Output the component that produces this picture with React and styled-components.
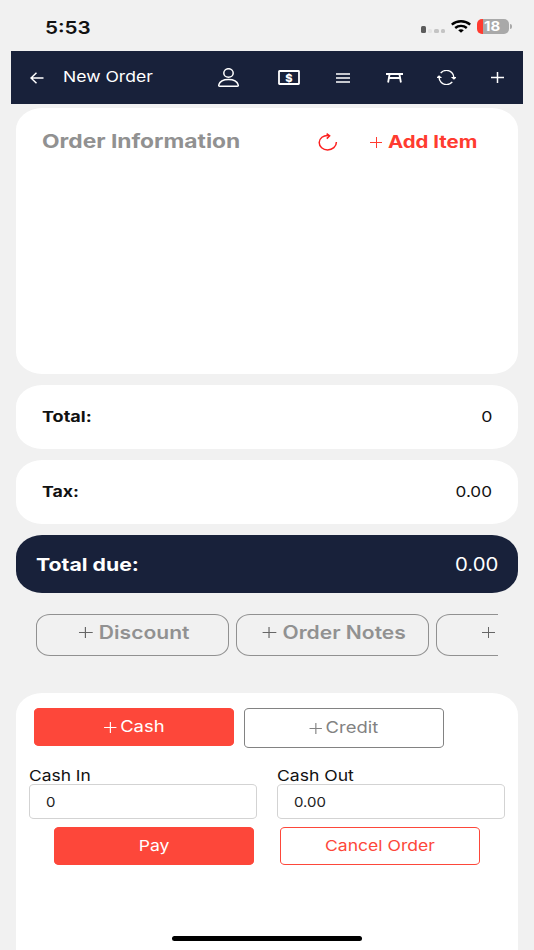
import React, { useState } from "react";
import styled, { createGlobalStyle } from "styled-components";

const App = () => {
  const [cashIn, setCashIn] = useState("0");
  const [cashOut, setCashOut] = useState("0.00");

  return (
    <Screen>
      <GlobalStyle />
      <StatusBar>
        <Text $size={17.5} $weight={600} $wide={1.18}>5:53</Text>
        <StatusIcons>
          <Signal>
            <Bar $h={7} $color="#5c5c5c" />
            <Bar $h={4} $color="#e4e4e4" />
            <Bar $h={4} $color="#c4c4c4" />
            <Bar $h={4} $color="#c4c4c4" />
          </Signal>
          <WifiIcon />
          <Battery>
            <Text $size={13} $weight={700} $wide={1.15} $origin="center" $color="#fff">18</Text>
          </Battery>
          <BatteryTip />
        </StatusIcons>
      </StatusBar>

      <NavBar>
        <BackIcon />
        <NavTitle>
          <Text $size={15} $wide={1.17} $color="#fff">New Order</Text>
        </NavTitle>
        <NavIcons>
          <PersonIcon />
          <MoneyIcon />
          <MenuIcon />
          <TableIcon />
          <SyncIcon />
          <AddIcon />
        </NavIcons>
      </NavBar>

      <OrderCard>
        <Text $size={19} $weight={700} $wide={1.2} $color="#919191">Order Information</Text>
        <OrderActions>
          <RefreshIcon />
          <AddItem>
            <Plus $size={12} />
            <Text $size={17} $weight={700} $wide={1.2} $color="#ff3b30">Add Item</Text>
          </AddItem>
        </OrderActions>
      </OrderCard>

      <SummaryCard>
        <Text $size={15} $weight={700} $wide={1.2}>Total:</Text>
        <Text $size={15} $wide={1.18} $origin="right">0</Text>
      </SummaryCard>
      <SummaryCard>
        <Text $size={15} $weight={700} $wide={1.18}>Tax:</Text>
        <Text $size={15} $wide={1.14} $origin="right">0.00</Text>
      </SummaryCard>
      <DueCard>
        <Text $size={18} $weight={700} $wide={1.18} $color="#fff">Total due:</Text>
        <Text $size={18} $wide={1.13} $origin="right" $color="#fff">0.00</Text>
      </DueCard>

      <Extras>
        <ExtraButton type="button">
          <Label>
            <Plus $size={11.5} />
            <Caption>Discount</Caption>
          </Label>
        </ExtraButton>
        <ExtraButton type="button">
          <Label>
            <Plus $size={11.5} />
            <Caption>Order Notes</Caption>
          </Label>
        </ExtraButton>
        <ExtraButton type="button" $cut>
          <Plus $size={13} />
        </ExtraButton>
      </Extras>

      <PaymentCard>
        <Methods>
          <PayButton type="button" $filled>
            <Label $small>
              <Plus $size={10.5} />
              Cash
            </Label>
          </PayButton>
          <PayButton type="button" $grey>
            <Label $small>
              <Plus $size={10.5} />
              Credit
            </Label>
          </PayButton>
        </Methods>
        <Fields>
          <Field>
            <Text $size={15} $wide={1.16}>Cash In</Text>
            <InputBox>
              <Input value={cashIn} onChange={(e) => setCashIn(e.target.value)} />
            </InputBox>
          </Field>
          <Field>
            <Text $size={15} $wide={1.17}>Cash Out</Text>
            <InputBox>
              <Input value={cashOut} onChange={(e) => setCashOut(e.target.value)} />
            </InputBox>
          </Field>
        </Fields>
        <Actions>
          <PayButton type="button" $filled>
            <Text $size={15} $wide={1.17} $origin="center" $color="#fff">Pay</Text>
          </PayButton>
          <PayButton type="button">
            <Text $size={15} $wide={1.17} $origin="center" $color="#fd473a">Cancel Order</Text>
          </PayButton>
        </Actions>
        <HomeIndicator />
      </PaymentCard>
    </Screen>
  );
};

const WifiIcon = () => (
  <svg width="20" height="13" viewBox="0 0 20 13" fill="none" stroke="#000" strokeWidth="2.4">
    <path d="M.8 4.600C6 .2 14 .2 19.200 4.600" />
    <path d="M4.200 8c3.300-2.900 8.300-2.900 11.600 0" />
    <path d="M7.200 10.300c1.600-1.300 4-1.300 5.600 0L10 12.800z" fill="#000" stroke="none" />
  </svg>
);

const BackIcon = () => (
  <svg width="14" height="12" viewBox="0 0 14 12" fill="none" stroke="#fff" strokeWidth="1.5">
    <path d="M13.500 6H1M6.500 .8L1 6l5.500 5.200" />
  </svg>
);

const PersonIcon = () => (
  <svg width="22" height="20" viewBox="0 0 22 20" fill="none" stroke="#fff" strokeWidth="1.5">
    <ellipse cx="10.500" cy="5" rx="4.700" ry="4.300" />
    <path d="M1.800 18.300C.8 18.300.5 17.600.8 16.800 1.800 13.300 6 11.500 10.500 11.500s8.700 1.800 9.700 5.300c.3.800 0 1.500-1 1.500z" />
  </svg>
);

const MoneyIcon = () => (
  <svg width="22" height="15" viewBox="0 0 22 15">
    <rect x="1" y="1" width="20" height="13" rx=".5" fill="none" stroke="#fff" strokeWidth="1.8" />
    <text x="11" y="11.500" fill="#fff" fontFamily="Inter, sans-serif" fontSize="11" fontWeight="800" textAnchor="middle">$</text>
  </svg>
);

const MenuIcon = () => (
  <svg width="14" height="10" viewBox="0 0 14 10" stroke="#fff" strokeWidth="1.6">
    <path d="M0 1h14M0 5h14M0 9h14" />
  </svg>
);

const TableIcon = () => (
  <svg width="17" height="11" viewBox="0 0 17 11" fill="none" stroke="#fff" strokeWidth="1.8">
    <path d="M0 2h17M2.600 6h11.800M3.600 2L2.100 10.500M13.400 2l1.500 8.500" />
  </svg>
);

const SyncIcon = () => (
  <svg width="19" height="15" viewBox="26 66 460 380" preserveAspectRatio="none" fill="none" stroke="#fff" strokeWidth="34">
    <path d="M434.670 285.590v-29.800c0-98.730-80.240-178.790-179.200-178.790a179 179 0 00-140.140 67.360m-38.530 82v29.800C76.800 355 157 435 256 435a180.450 180.450 0 00140-66.920" />
    <path d="M46 252l30-30 32 30zM466 260l-30 30-32-30z" fill="#fff" />
  </svg>
);

const AddIcon = () => (
  <svg width="13" height="11" viewBox="0 0 13 11" stroke="#fff" strokeWidth="1.5">
    <path d="M0 5.500h13M6.500 0v11" />
  </svg>
);

const RefreshIcon = () => (
  <svg width="20" height="18" viewBox="0 0 20 18" fill="none" stroke="#fc1f1f" strokeWidth="1.5">
    <path d="M11 2.500C5.200 1.900 1.200 5.400 1.200 9.600c0 4.100 3.700 7.300 8.400 7.300 4.900 0 8.800-3.300 8.800-8" />
    <path d="M8.600 .6l3 2.200-2.800 2.800" />
  </svg>
);

const GlobalStyle = createGlobalStyle`
  *{
    box-sizing: border-box;
  }
  body{
    margin: 0;
    background-color: #f1f1f1;
    font-family: Inter, "Liberation Sans", sans-serif;
  }
  button{
    font-family: inherit;
    padding: 0;
    margin: 0;
    background: none;
  }
  svg{
    display: block;
    flex: none;
  }
`;

const Screen = styled.div`
  width: 534px;
  height: 950px;
  overflow: hidden;
  display: flex;
  flex-direction: column;
  background-color: #f1f1f1;
`;

/* Wide lettering, grown from the given side */
const Text = styled.span`
  display: inline-block;
  white-space: nowrap;
  line-height: 1.2;
  font-size: ${(p) => p.$size}px;
  font-weight: ${(p) => p.$weight || 400};
  color: ${(p) => p.$color || "#111"};
  transform: scaleX(${(p) => p.$wide});
  transform-origin: ${(p) => p.$origin || "left"};
`;

const Label = styled.span`
  display: inline-flex;
  align-items: center;
  gap: ${(p) => (p.$small ? 3.5 : 5.5)}px;
  white-space: nowrap;
  font-size: ${(p) => (p.$small ? 16 : 18)}px;
  line-height: 1.2;
  transform: scaleX(${(p) => (p.$small ? 1.15 : 1.17)});
`;

const Caption = styled.span`
  font-weight: 600;
  color: #919191;
`;

const StatusBar = styled.div`
  flex: none;
  height: 51px;
  padding: 3px 22px 0 44.5px;
  display: flex;
  align-items: center;
  justify-content: space-between;
`;

const StatusIcons = styled.div`
  display: flex;
  align-items: center;
  margin-top: -1px;
`;

const Signal = styled.div`
  display: flex;
  align-items: flex-end;
  gap: 2px;
  height: 14px;
  padding-bottom: 1px;
  margin-right: 6px;
`;

const Bar = styled.span`
  width: 4.5px;
  height: ${(p) => p.$h}px;
  border-radius: 1.5px;
  background-color: ${(p) => p.$color};
`;

const Battery = styled.div`
  width: 32px;
  height: 15px;
  margin-left: 6px;
  padding-right: 1px;
  border-radius: 5px;
  background: linear-gradient(90deg, #ff3b30 6px, #a9a9a9 6px);
  display: flex;
  align-items: center;
  justify-content: center;
`;

const BatteryTip = styled.span`
  width: 2px;
  height: 5px;
  margin-left: 1px;
  border-radius: 0 2px 2px 0;
  background-color: #a9a9a9;
`;

const NavBar = styled.div`
  height: 53px;
  margin: 0 11px;
  padding: 0 19px 0 18.5px;
  flex: none;
  display: flex;
  align-items: center;
  background-color: #18213a;
`;

const NavTitle = styled.div`
  width: 155px;
  margin: -3px 0 0 19px;
`;

const NavIcons = styled.div`
  flex: 1;
  display: grid;
  grid-template-columns: 60px 58px 50px 51px 54px 13px;
  align-items: center;
`;

const Card = styled.div`
  flex: none;
  margin: 0 16px;
  border-radius: 26px / 22px;
  background-color: #fff;
`;

const OrderCard = styled(Card)`
  height: 266px;
  margin-top: 4px;
  padding: 23px 41px 0 26px;
  display: flex;
  justify-content: space-between;
  align-items: flex-start;
`;

const OrderActions = styled.div`
  width: 159px;
  padding-top: 1px;
  display: flex;
  justify-content: space-between;
  align-items: center;
`;

const AddItem = styled.div`
  width: 107px;
  display: flex;
  align-items: center;
  gap: 5.5px;
  color: #ff3b30;
`;

const Plus = styled.span`
  width: ${(p) => p.$size}px;
  height: 11px;
  flex: none;
  background:
    linear-gradient(currentColor, currentColor) center / 100% 1px no-repeat,
    linear-gradient(currentColor, currentColor) center / 1px 100% no-repeat;
`;

const SummaryCard = styled(Card)`
  height: 64px;
  margin-top: 11px;
  padding: 0 26px;
  display: flex;
  align-items: center;
  justify-content: space-between;
`;

const DueCard = styled(SummaryCard)`
  height: 58px;
  padding: 1px 20px 0;
  background-color: #18213a;
`;

const Extras = styled.div`
  flex: none;
  display: flex;
  gap: 7px;
  margin: 21px 36px 0;
  overflow: hidden;
`;

const ExtraButton = styled.button`
  flex: none;
  width: 193px;
  height: 42px;
  padding: 0 0 5px ${(p) => (p.$cut ? 45 : 4)}px;
  border: 1px solid #919191;
  border-radius: 14px / 12px;
  display: flex;
  align-items: center;
  justify-content: ${(p) => (p.$cut ? "flex-start" : "center")};
  color: #666;
`;

const PaymentCard = styled(Card)`
  flex: 1;
  margin-top: 37px;
  padding-top: 15px;
  border-radius: 26px 26px 0 0 / 22px 22px 0 0;
  display: flex;
  flex-direction: column;
`;

const Methods = styled.div`
  display: flex;
  align-items: flex-start;
  gap: 10px;
  padding-left: 18px;
  height: 59px;
`;

const PayButton = styled.button`
  width: 200px;
  height: ${(p) => (p.$grey ? 40 : 38)}px;
  border: 1px solid ${(p) => (p.$grey ? "#828282" : "#fd473a")};
  border-radius: 5px / 4px;
  background-color: ${(p) => (p.$filled ? "#fd473a" : "#fff")};
  color: ${(p) => (p.$filled ? "#fff" : "#828282")};
  display: flex;
  align-items: center;
  justify-content: center;
`;

const Fields = styled.div`
  display: flex;
  gap: 20px;
  padding-left: 13px;
`;

const Field = styled.label`
  width: 228px;
  display: flex;
  flex-direction: column;
  align-items: flex-start;
`;

const InputBox = styled.div`
  width: 100%;
  height: 35px;
  margin-top: -1px;
  padding: 0 16px;
  border: 1px solid #d3d3d3;
  border-radius: 5px / 4px;
  display: flex;
  align-items: center;
`;

const Input = styled.input`
  width: 160px;
  padding: 0;
  border: none;
  background: none;
  font-family: inherit;
  font-size: 13px;
  color: #222;
  outline: none;
  transform: scaleX(1.15);
  transform-origin: left;
`;

const Actions = styled.div`
  display: flex;
  gap: 26px;
  padding: 8px 0 0 38px;
`;

const HomeIndicator = styled.div`
  width: 190px;
  height: 5px;
  margin: auto auto 9px;
  border-radius: 3px;
  background-color: #000;
`;

export default App;
